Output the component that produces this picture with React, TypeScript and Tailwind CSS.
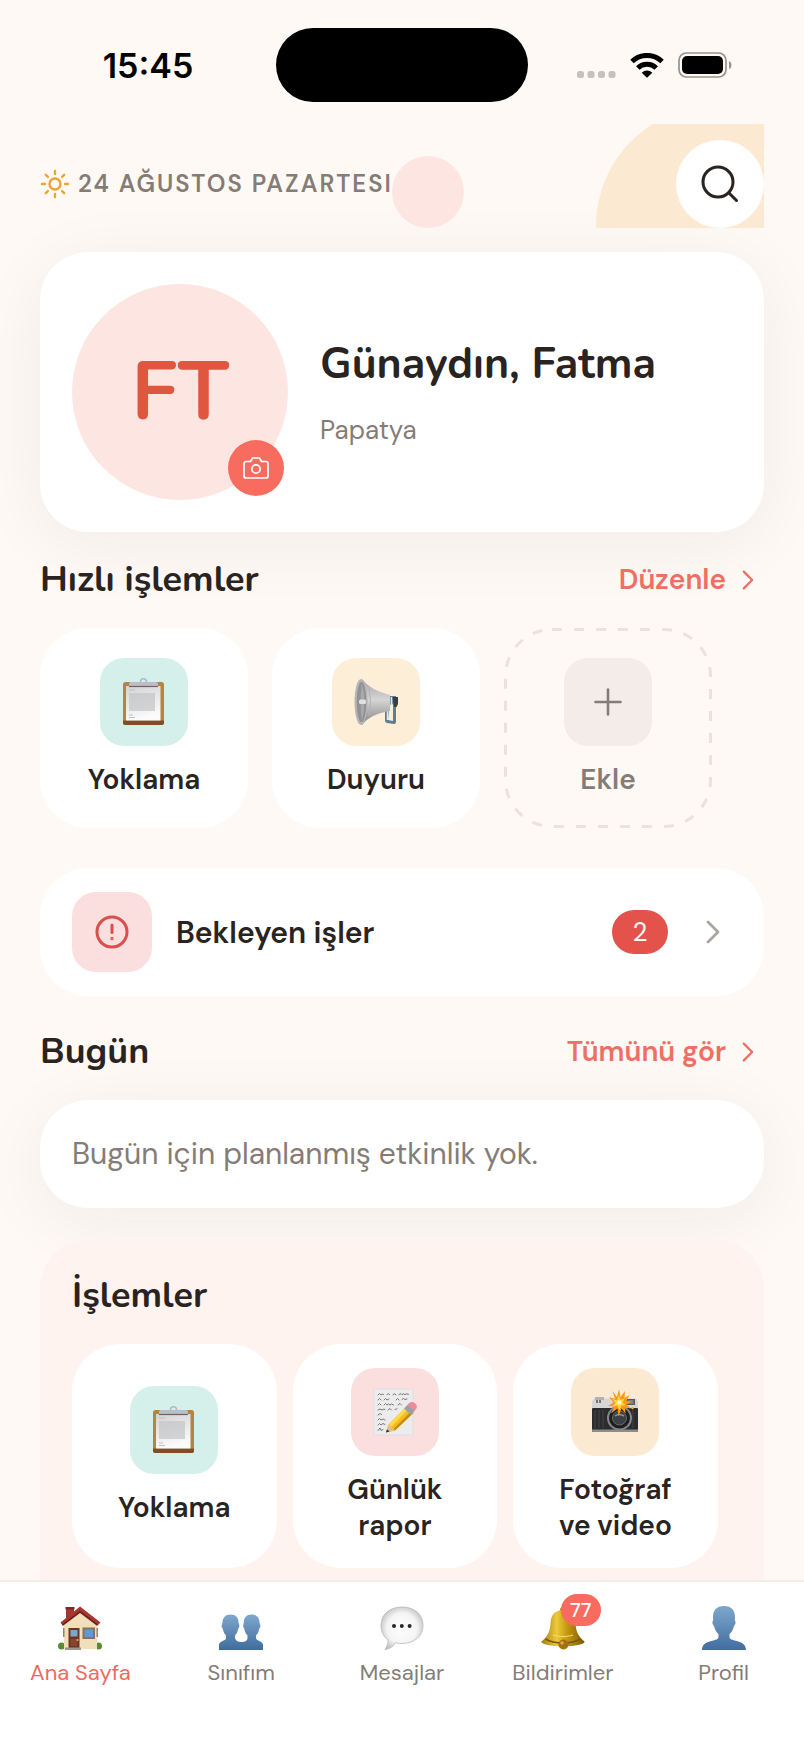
import { useState } from 'react';
import type { ReactNode } from 'react';

function ClipboardEmoji() {
  return (
    <svg viewBox="0 0 48 48" className="h-12 w-12" aria-hidden="true">
      <defs>
        <linearGradient id="clipPaper" x1="0" y1="0" x2="0.3" y2="1">
          <stop offset="0" stopColor="#d3d3d5" />
          <stop offset="1" stopColor="#fbfbfc" />
        </linearGradient>
      </defs>
      <rect x="3" y="4" width="41" height="43" rx="2.500" fill="#b5853f" />
      <path d="M3 42.500h41v2a2.500 2.500 0 0 1-2.500 2.500h-36a2.500 2.500 0 0 1-2.500-2.500z" fill="#7d4f22" />
      <rect x="6" y="8" width="34.500" height="34.500" fill="url(#clipPaper)" />
      <rect x="9" y="15" width="26" height="18" fill="#c3c4c6" opacity="0.7" />
      <path d="M9 12h6M9 37h4M9 39.500h6" stroke="#c0c1c4" strokeWidth="1" />
      <circle cx="23.500" cy="3.800" r="3" fill="none" stroke="#a9bcc9" strokeWidth="1.600" />
      <path d="M9 5.500q0-1.500 2-1.500h25q2 0 2 1.500v3H9z" fill="#b9bfc7" />
      <path d="M9 8.500h29" stroke="#77605a" strokeWidth="1.200" />
    </svg>
  );
}

function MegaphoneEmoji() {
  return (
    <svg viewBox="0 0 48 48" className="h-12 w-12" aria-hidden="true">
      <defs>
        <linearGradient id="hornBody" x1="0" y1="0" x2="0" y2="1">
          <stop offset="0" stopColor="#a5a4a6" />
          <stop offset="0.450" stopColor="#d6d5d6" />
          <stop offset="1" stopColor="#858486" />
        </linearGradient>
      </defs>
      <path d="M36 18h8v26q0 2-2 2l-7-1q-2-.5-2-2.500V32z" fill="#5e7f92" />
      <path d="M37.500 28l3.500-2v17l-5-1z" fill="#fbeed4" />
      <path d="M39.500 19v7l-4 8v8" stroke="#d5edf6" strokeWidth="1.500" fill="none" />
      <path d="M40.500 19H46v7l-1.500 3H42z" fill="#3b3d45" />
      <path d="M10 1Q18 12 38 17v16Q18 36 10 47z" fill="url(#hornBody)" />
      <path d="M17 10q3 14 0 28" stroke="#b3b2b4" strokeWidth="1" fill="none" />
      <ellipse cx="9" cy="24" rx="6.500" ry="23" fill="#b5b4b6" />
      <ellipse cx="9.500" cy="24" rx="4.800" ry="20" fill="#929193" />
      <path d="M10 5q5 18 0 38q-3-19 0-38z" fill="#a9a8aa" />
      <rect x="7" y="21.500" width="7" height="4.500" rx="1.500" fill="#e0e0e1" />
    </svg>
  );
}

function MemoEmoji() {
  return (
    <svg viewBox="0 0 48 48" className="h-12 w-12" aria-hidden="true">
      <rect x="3" y="1" width="39" height="46" fill="#ececed" stroke="#dcdadb" strokeWidth="0.600" />
      <g stroke="#6b696b" strokeWidth="0.900" fill="none" strokeLinecap="round">
        <path d="M7 7l1.500-1.500L10 7l1.500-1 1 .5M16 6.500l1.500-.8 1 .8M22 6.800l1.500-1 1.500 1M28 6.500l2-.8 1 1 1.500-1 1.500 1 1.500-.8 2 .4" />
        <path d="M7 12l1.500-1.500L10 12M13 12l1.500-1.500 1.500 1.500 2-1M25 12l1.500-1.500L28 12M31 11.500l1.500-1 1.500 1 2-.5" />
        <path d="M7 17l1.500-1.500L10 17M13 17l1.500-1.500L16 17l1.500-1 1.500 1 1.500-1 2 1M27 17l2-1.500 1.500 1.500" />
        <path d="M7 22l2-1 2 1 2-1 1 .6M17 22l2-1.500 1.500 1.500M24 21.500l2-.7M7 27l2-1.500 1.500 1" />
        <path d="M7 32l1.500-1.500L10 32l2-1 2 1M7 37l1.500-1.500L10 37l2-1.500 2 1M7 42.500l2-2.500 1 2.500 2-1" />
      </g>
      <path d="M15 44.500l2.500-8 18-18 7 6-18.500 18z" fill="#f2bd1d" />
      <path d="M17.500 36.500l18-18 2.500 2-18 18.500z" fill="#fbd94c" />
      <path d="M22 41.500l18-18 2.500 1.500L24 42.500z" fill="#c98a12" />
      <path d="M15 44.500l2.500-8 6.500 6z" fill="#e4bd86" />
      <path d="M15 44.500l1-3.200 2.400 2.300z" fill="#2d2a2a" />
      <path d="M33 20.500l4-4 7 6-4 4.500z" fill="#98a2a6" />
      <path d="M36.500 16.500l2-1.800q3-1.700 5.700.8t1 5.200L43.500 23z" fill="#f0899a" />
    </svg>
  );
}

function CameraEmoji() {
  return (
    <svg viewBox="0 0 48 48" className="h-12 w-12" aria-hidden="true">
      <path d="M1 13.500l2-3h42l2 3V24H1z" fill="#d6d6d6" />
      <path d="M4 9h9v3H4z" fill="#b2b2b4" />
      <rect x="1" y="20" width="46" height="24" rx="1" fill="#2c2c2e" />
      <path d="M1 41.500h46V43a1 1 0 0 1-1 1H2a1 1 0 0 1-1-1z" fill="#8d8d8f" />
      <path d="M4 22v18M8 22v18M12 22v18M42 22v18" stroke="#3d3d40" strokeWidth="1.500" />
      <path d="M6 12v3M9 12v3" stroke="#55565a" strokeWidth="1.500" />
      <rect x="35" y="11" width="9" height="6" fill="#58595c" />
      <path d="M36.500 13h6M36.500 15h6" stroke="#a5a6aa" strokeWidth="1" />
      <circle cx="28.500" cy="30" r="12.500" fill="#85878a" />
      <circle cx="28.500" cy="30" r="10.500" fill="#1d1e20" />
      <circle cx="28.500" cy="30" r="7" fill="#3a4047" stroke="#66696d" strokeWidth="1" />
      <path d="M24 28q4-3 9 0" stroke="#8f999f" strokeWidth="1.500" fill="none" />
      <path
        d="M28 1l1.500 8L34 3l-.5 7 5-3-3 6 5.500.5-5.500 3 4.500 4-6-1 .5 6-4-5-3 8-1-8-6.500 5 3.500-7-6.500-.5 5.500-3.500L18 9l6 2-2.500-8 4.500 6z"
        fill="#f79b17"
      />
      <path d="M28 7l1.500 5 4-1.500-2 4 3 2.500-4 .5-2 4.500-2-4.500-5 1 3-3.500-3-4 4.500 1.500z" fill="#ffd640" />
      <circle cx="28.300" cy="14.500" r="2.200" fill="#fff6c4" />
      <circle cx="41.500" cy="20" r="1.200" fill="#ffb41e" />
    </svg>
  );
}

function HouseEmoji() {
  return (
    <svg viewBox="0 0 44 44" className="h-11 w-11" aria-hidden="true">
      <path d="M8 2h8v12H8z" fill="#9c3a30" />
      <path d="M7.500 1h9v2.500h-9z" fill="#7c2a24" />
      <circle cx="3.500" cy="40" r="3.500" fill="#5b8a34" />
      <circle cx="40.500" cy="40" r="3.500" fill="#5b8a34" />
      <path d="M6 15L22 3l17 13v27H6z" fill="#f0dfb8" />
      <path d="M5 22h1.500v9H5zM38.500 22H40v9h-1.500z" fill="#93847a" />
      <path d="M22 .5L2.500 16.500l2 3L22 6l17.500 13.500 3-3z" fill="#a93630" />
      <path d="M4 18.500L22 4.500l18 14-1 1.200L22 7 5 19.700z" fill="#6f211e" />
      <rect x="10.500" y="22" width="11" height="20" fill="#6d3424" />
      <rect x="12.500" y="24" width="7" height="6.500" fill="#78a7cf" />
      <path d="M12.500 33h7v7h-7z" fill="#87452f" />
      <circle cx="19.500" cy="34" r="1" fill="#e9c25b" />
      <rect x="24.500" y="21.500" width="12.500" height="11.500" fill="#85735f" />
      <rect x="26.500" y="23.500" width="8.500" height="7.500" fill="#5f9bd3" />
      <path d="M7 41.500h16V44H7z" fill="#9c9690" />
    </svg>
  );
}

function PeopleEmoji() {
  return (
    <svg viewBox="0 0 44 44" className="h-11 w-11" aria-hidden="true">
      <defs>
        <linearGradient id="peopleFill" x1="0" y1="0" x2="0" y2="1">
          <stop offset="0" stopColor="#7fa8cd" />
          <stop offset="1" stopColor="#3f6c9c" />
        </linearGradient>
      </defs>
      <path
        d="M11.500 8.500C17 8.500 19.500 12 19.500 16.500l.5 1.500c.6 1.700.4 3.600-.7 4.500-.6 3.500-1.800 5.600-3.300 7v3c1 2.500 3 3.500 6.500 3.500s5.500-1 6-3.500v-3c-1.500-1.400-2.700-3.500-3.300-7-1.100-.9-1.300-2.800-.7-4.500l.3-1.500c0-4.500 2.700-8 7.700-8s8 3.500 8 8l.5 1.500c.6 1.700.4 3.600-.7 4.500-.6 3.500-1.800 5.600-3.300 7v3c.5 2.500 7 2.500 7 6.500v5H0v-5c0-4 6.500-4 7-6.500v-3c-1.500-1.400-2.700-3.500-3.300-7-1.100-.9-1.300-2.800-.7-4.500l.5-1.500c0-4.500 3-8 8-8z"
        fill="url(#peopleFill)"
      />
    </svg>
  );
}

function BubbleEmoji() {
  return (
    <svg viewBox="0 0 44 44" className="h-11 w-11" aria-hidden="true">
      <defs>
        <radialGradient id="bubbleFill" cx="0.500" cy="0.500" r="0.550">
          <stop offset="0" stopColor="#ffffff" />
          <stop offset="0.650" stopColor="#f4f4f5" />
          <stop offset="1" stopColor="#c2c2c4" />
        </radialGradient>
      </defs>
      <path
        d="M22 1C34.500 1 43 8.500 43 19.300S34.500 37.500 22 37.500c-2.300 0-4.500-.2-6.500-.8-1.500 3-5 6-10.500 6.800 2-3 3-6 3-9.500C3.500 30.500 1 25.500 1 19.300 1 8.500 9.500 1 22 1z"
        fill="url(#bubbleFill)"
        stroke="#b9b9bb"
        strokeWidth="0.800"
      />
      <g fill="#28282b">
        <circle cx="14" cy="20" r="2" />
        <circle cx="21.800" cy="20" r="2" />
        <circle cx="29.600" cy="20" r="2" />
      </g>
    </svg>
  );
}

function BellEmoji() {
  return (
    <svg viewBox="0 0 44 44" className="h-11 w-11" aria-hidden="true">
      <defs>
        <linearGradient id="bellFill" x1="0" y1="0" x2="1" y2="0">
          <stop offset="0" stopColor="#a67a10" />
          <stop offset="0.350" stopColor="#ecca3a" />
          <stop offset="0.600" stopColor="#c3980f" />
          <stop offset="1" stopColor="#7d5908" />
        </linearGradient>
      </defs>
      <circle cx="22" cy="4" r="3" fill="#b38a12" />
      <path d="M22 4c8 0 12 5 12.500 13 .6 9 2.500 13 9 18.500.8 2.500-9 5-21.500 5S-.3 38 .5 35.500C7 30 8.900 26 9.500 17 10 9 14 4 22 4z" fill="url(#bellFill)" />
      <path d="M4.500 33c5 3 11 4 17.500 4s12.500-1 17.500-4" stroke="#7a5708" strokeWidth="1.600" fill="none" />
      <path d="M12 29c6 2 14 2 20 0" stroke="#f6e06c" strokeWidth="1" fill="none" />
      <circle cx="22.500" cy="38.500" r="5" fill="#a5700f" />
      <circle cx="21" cy="37" r="1.800" fill="#dcae3d" />
    </svg>
  );
}

function PersonEmoji() {
  return (
    <svg viewBox="0 0 44 44" className="h-11 w-11" aria-hidden="true">
      <defs>
        <linearGradient id="personFill" x1="0" y1="0" x2="0" y2="1">
          <stop offset="0" stopColor="#7ea7cc" />
          <stop offset="1" stopColor="#416e9f" />
        </linearGradient>
      </defs>
      <path
        d="M22 0c7.500 0 11 4.500 11 11l-.2 3.500c1.200.6 1 4-.8 5.500-.8 3.500-2.300 6-4.500 8v3.500c1.500 4.500 16.500 2 16.500 12.500H0C0 33.500 15 36 16.500 31.500V28c-2.200-2-3.700-4.500-4.500-8-1.800-1.500-2-4.900-.8-5.500L11 11C11 4.500 14.500 0 22 0z"
        fill="url(#personFill)"
      />
    </svg>
  );
}

function Chevron({ className }: { className: string }) {
  return (
    <svg viewBox="0 0 14 24" className={className} fill="none" stroke="currentColor" strokeWidth="2.800" strokeLinecap="round" strokeLinejoin="round" aria-hidden="true">
      <path d="M2 2l10 10L2 22" />
    </svg>
  );
}

function StatusBar() {
  return (
    <div className="grid h-[124px] shrink-0 grid-cols-[1fr_252px_1fr] items-start text-black">
      <div className="flex h-[130px] items-center justify-center pl-5 font-['Inter',sans-serif] text-[34px] font-semibold">15:45</div>
      <div className="mt-7 h-[74px] rounded-full bg-black" />
      <div className="flex h-[130px] items-center justify-center gap-3.5 pr-6">
        <svg viewBox="0 0 40 28" className="h-7 w-10" fill="#c6c1bd" aria-hidden="true">
          <rect x="1" y="20" width="7" height="7" rx="2.500" />
          <rect x="11.500" y="20" width="7" height="7" rx="2.500" />
          <rect x="22" y="20" width="7" height="7" rx="2.500" />
          <rect x="32.500" y="20" width="7" height="7" rx="2.500" />
        </svg>
        <svg viewBox="0 0 34 25" className="h-[25px] w-[34px]" fill="none" stroke="#000" strokeWidth="5" aria-hidden="true">
          <path d="M2 8.500a21.500 21.500 0 0 1 30 0" />
          <path d="M7.800 15a13.200 13.200 0 0 1 18.400 0" />
          <path d="M17 24.800l-5.300-5a7.500 7.500 0 0 1 10.600 0z" fill="#000" stroke="none" />
        </svg>
        <svg viewBox="0 0 54 26" className="h-[26px] w-[54px]" aria-hidden="true">
          <rect x="1" y="1" width="47" height="24" rx="7.500" fill="none" stroke="#96928f" strokeWidth="1.700" />
          <rect x="4" y="4" width="41" height="18" rx="5" fill="#000" />
          <path d="M51 9q2.500 1 2.500 4T51 17z" fill="#96928f" />
        </svg>
      </div>
    </div>
  );
}

function SectionTitle({ title, link }: { title: string; link?: string }) {
  return (
    <div className="mb-6 flex h-12 items-center justify-between pr-2.5">
      <h2 className="font-['Nunito','Lato',sans-serif] text-[36px] font-bold leading-[48px]">{title}</h2>
      {link && (
        <a href="#" className="flex items-center gap-4 text-[28px] font-semibold text-[#ee6f63]">
          {link}
          <Chevron className="h-5 w-3" />
        </a>
      )}
    </div>
  );
}

function ActionTile({ label, tint, children }: { label: string; tint: string; children: ReactNode }) {
  return (
    <>
      <span className={`flex h-[88px] w-[88px] items-center justify-center rounded-3xl ${tint}`}>{children}</span>
      <span className="text-[28px] font-semibold leading-9">{label}</span>
    </>
  );
}

const navItems = [
  { name: 'Ana Sayfa', icon: HouseEmoji, badge: 0 },
  { name: 'Sınıfım', icon: PeopleEmoji, badge: 0 },
  { name: 'Mesajlar', icon: BubbleEmoji, badge: 0 },
  { name: 'Bildirimler', icon: BellEmoji, badge: 77 },
  { name: 'Profil', icon: PersonEmoji, badge: 0 },
];

const operations = [
  { name: 'Yoklama', icon: ClipboardEmoji, tint: 'bg-[#d5f0ea]' },
  { name: 'Günlük rapor', icon: MemoEmoji, tint: 'bg-[#fadfde]' },
  { name: 'Fotoğraf ve video', icon: CameraEmoji, tint: 'bg-[#fbe9d1]' },
];

export default function App() {
  const [active, setActive] = useState('Ana Sayfa');

  return (
    <div className="flex h-screen flex-col overflow-hidden bg-[#fef9f5] font-['DM_Sans','Inter',sans-serif] text-[#292321]">
      <StatusBar />

      <main className="min-h-0 flex-1 overflow-hidden px-10">
        {/* HEADER */}
        <header className="relative flex h-[104px] items-end justify-between overflow-hidden">
          <div className="absolute -right-[72px] -top-[18px] h-60 w-60 rounded-full bg-[#fbe9d1]" />
          <div className="absolute bottom-0 left-[352px] h-[72px] w-[72px] rounded-full bg-[#fde6e1]" />
          <p className="relative flex h-[88px] items-center gap-2 text-[24px] font-semibold tracking-[2px] text-[#857c76]">
            <svg viewBox="0 0 30 30" className="h-[30px] w-[30px]" fill="none" stroke="#eaa534" strokeWidth="2.400" strokeLinecap="round" aria-hidden="true">
              <circle cx="15" cy="15" r="5.500" />
              <path d="M15 2v3M15 25v3M2 15h3M25 15h3M5.800 5.800l2.100 2.100M22.100 22.100l2.100 2.100M5.800 24.200l2.100-2.100M22.100 7.900l2.100-2.100" />
            </svg>
            24 AĞUSTOS PAZARTESI
          </p>
          <button aria-label="Ara" className="relative flex h-[88px] w-[88px] items-center justify-center rounded-full bg-white">
            <svg viewBox="0 0 40 40" className="h-10 w-10" fill="none" stroke="#292321" strokeWidth="3" strokeLinecap="round" aria-hidden="true">
              <circle cx="18" cy="18" r="15" />
              <path d="M29 29l7.500 7.500" />
            </svg>
          </button>
        </header>

        {/* PROFILE */}
        <section className="mt-6 flex items-center gap-8 rounded-[48px] bg-white p-8 shadow-[0_12px_72px_rgba(60,40,30,0.06)]">
          <div className="relative flex h-[216px] w-[216px] shrink-0 items-center justify-center rounded-full bg-[#fde6e1]">
            <span className="font-['Nunito','Lato',sans-serif] text-[82px] font-bold leading-none text-[#e0573f]">FT</span>
            <button aria-label="Fotoğrafı değiştir" className="absolute bottom-1 right-1 flex h-14 w-14 items-center justify-center rounded-full bg-[#f76c5e]">
              <svg viewBox="0 0 26 22" className="h-[22px] w-[26px]" fill="none" stroke="#fff" strokeWidth="1.700" strokeLinejoin="round" aria-hidden="true">
                <path d="M3 4.500h4.500L9.500 1h7l2 3.500H23a2 2 0 0 1 2 2V19a2 2 0 0 1-2 2H3a2 2 0 0 1-2-2V6.500a2 2 0 0 1 2-2z" />
                <circle cx="13" cy="12" r="4.200" />
              </svg>
            </button>
          </div>
          <div className="min-w-0">
            <h1 className="font-['Nunito','Lato',sans-serif] text-[43px] font-bold leading-[56px]">Günaydın, Fatma</h1>
            <p className="mt-5 text-[26px] leading-9 text-[#857c76]">Papatya</p>
          </div>
        </section>

        {/* QUICK ACTIONS */}
        <section className="mt-6">
          <SectionTitle title="Hızlı işlemler" link="Düzenle" />
          <div className="flex gap-6">
            <button className="flex h-[200px] w-[208px] flex-col items-center justify-center gap-4 rounded-[48px] bg-white">
              <ActionTile label="Yoklama" tint="bg-[#d5f0ea]">
                <ClipboardEmoji />
              </ActionTile>
            </button>
            <button className="flex h-[200px] w-[208px] flex-col items-center justify-center gap-4 rounded-[48px] bg-white">
              <ActionTile label="Duyuru" tint="bg-[#fdefd7]">
                <MegaphoneEmoji />
              </ActionTile>
            </button>
            <button className="relative flex h-[200px] w-[208px] flex-col items-center justify-center gap-4 rounded-[48px] text-[#857c76]">
              <svg className="absolute inset-0 h-full w-full" viewBox="0 0 208 200" fill="none" stroke="#e9e2df" strokeWidth="3" strokeDasharray="10 12" aria-hidden="true">
                <rect x="1.500" y="1.500" width="205" height="197" rx="46.500" />
              </svg>
              <ActionTile label="Ekle" tint="bg-[#f3ece8]">
                <svg viewBox="0 0 28 28" className="h-7 w-7" stroke="currentColor" strokeWidth="2.600" strokeLinecap="round" aria-hidden="true">
                  <path d="M14 1.500v25M1.500 14h25" />
                </svg>
              </ActionTile>
            </button>
          </div>
        </section>

        {/* PENDING */}
        <button className="mt-10 flex h-32 w-full items-center rounded-[48px] bg-white px-8 text-left">
          <span className="flex h-20 w-20 items-center justify-center rounded-3xl bg-[#fbdfde]">
            <svg viewBox="0 0 34 34" className="h-[34px] w-[34px]" fill="none" stroke="#d84f4b" strokeWidth="3" strokeLinecap="round" aria-hidden="true">
              <circle cx="17" cy="17" r="15" />
              <path d="M17 10v7.500" />
              <circle cx="17" cy="23.500" r="0.600" strokeWidth="2.200" />
            </svg>
          </span>
          <span className="ml-6 flex-1 text-[30px] font-semibold">Bekleyen işler</span>
          <span className="flex h-11 w-14 items-center justify-center rounded-full bg-[#e4534b] text-[26px] text-white">2</span>
          <Chevron className="ml-[38px] mr-3 h-6 w-[14px] text-[#aaa39e]" />
        </button>

        {/* TODAY */}
        <section className="mt-8">
          <SectionTitle title="Bugün" link="Tümünü gör" />
          <p className="rounded-[48px] bg-white px-8 py-8 text-[30px] leading-[44px] text-[#857c76] shadow-[0_12px_72px_rgba(60,40,30,0.06)]">
            Bugün için planlanmış etkinlik yok.
          </p>
        </section>

        {/* OPERATIONS */}
        <section className="mt-8 rounded-t-[48px] bg-[#fff3ef] p-8">
          <SectionTitle title="İşlemler" />
          <div className="flex gap-4">
            {operations.map((item) => (
              <button key={item.name} className="flex h-56 w-[31%] flex-col items-center justify-center gap-4 rounded-[48px] bg-white px-10">
                <ActionTile label={item.name} tint={item.tint}>
                  <item.icon />
                </ActionTile>
              </button>
            ))}
          </div>
        </section>
      </main>

      {/* BOTTOM NAV */}
      <nav className="relative grid h-[168px] shrink-0 grid-cols-5 items-start border-t-2 border-[#f5ece8] bg-white pt-6">
        {navItems.map((item) => (
          <button
            key={item.name}
            onClick={() => setActive(item.name)}
            className={`flex flex-col items-center gap-2 text-[22px] leading-[30px] ${active === item.name ? 'text-[#ee6a5f]' : 'text-[#857c76]'}`}
          >
            <span className="relative">
              <item.icon />
              {item.badge > 0 && (
                <span className="absolute -right-4 -top-3 flex h-8 w-10 items-center justify-center rounded-full bg-[#f76c5e] text-[20px] font-medium text-white">
                  {item.badge}
                </span>
              )}
            </span>
            {item.name}
          </button>
        ))}
      </nav>
    </div>
  );
}
